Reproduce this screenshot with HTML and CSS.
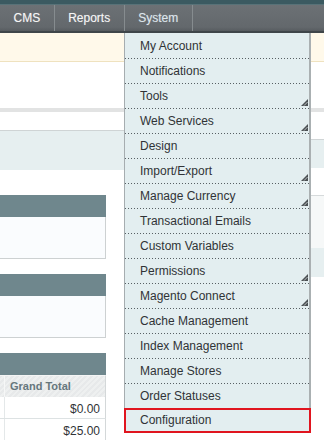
FILE: index.html
```html
<!DOCTYPE html>
<html>
<head>
<meta charset="utf-8">
<link rel="stylesheet" href="styles.css">
</head>
<body>
<div class="page">
  <div class="topbar"></div>
  <nav class="nav">
    <span class="nav-item">CMS</span>
    <span class="nav-item">Reports</span>
    <span class="nav-item nav-active">System</span>
  </nav>
  <div class="notice"></div>
  <div class="blank-top"></div>
  <div class="grey-band"></div>
  <div class="columns">
    <div class="left-col">
      <div class="lc-top"></div>
      <div class="lc-band"></div>
      <div class="lc-gap"></div>
      <div class="box">
        <div class="box-head"></div>
        <div class="box-body"></div>
      </div>
      <div class="box">
        <div class="box-head"></div>
        <div class="box-body"></div>
      </div>
      <div class="box">
        <div class="box-head"></div>
        <div class="grid-head">
          <div class="cell-first"></div>
          <div class="cell-title">Grand Total</div>
        </div>
        <div class="grid-row">
          <div class="cell-first"></div>
          <div class="cell-num">$0.00</div>
        </div>
        <div class="grid-row">
          <div class="cell-first"></div>
          <div class="cell-num">$25.00</div>
        </div>
      </div>
    </div>
    <div class="right-col">
      <div class="rc-top"></div>
      <div class="rc-band"></div>
      <div class="rc-gap"></div>
      <div class="rc-panel"></div>
      <div class="rc-band2"></div>
    </div>
  </div>

  <ul class="dropdown">
    <li><span>My Account</span></li>
    <li><span>Notifications</span></li>
    <li><span>Tools</span><svg class="arrow" viewBox="0 0 7 7" width="7" height="7"><path d="M7 0V7H0Z" fill="#4b5053"/><path d="M3 6.6L6.6 3" stroke="#c8d0d2" stroke-width="0.9"/></svg></li>
    <li><span>Web Services</span><svg class="arrow" viewBox="0 0 7 7" width="7" height="7"><path d="M7 0V7H0Z" fill="#4b5053"/><path d="M3 6.6L6.6 3" stroke="#c8d0d2" stroke-width="0.9"/></svg></li>
    <li><span>Design</span></li>
    <li><span>Import/Export</span><svg class="arrow" viewBox="0 0 7 7" width="7" height="7"><path d="M7 0V7H0Z" fill="#4b5053"/><path d="M3 6.6L6.6 3" stroke="#c8d0d2" stroke-width="0.9"/></svg></li>
    <li><span>Manage Currency</span><svg class="arrow" viewBox="0 0 7 7" width="7" height="7"><path d="M7 0V7H0Z" fill="#4b5053"/><path d="M3 6.6L6.6 3" stroke="#c8d0d2" stroke-width="0.9"/></svg></li>
    <li><span>Transactional Emails</span></li>
    <li><span>Custom Variables</span></li>
    <li><span>Permissions</span><svg class="arrow" viewBox="0 0 7 7" width="7" height="7"><path d="M7 0V7H0Z" fill="#4b5053"/><path d="M3 6.6L6.6 3" stroke="#c8d0d2" stroke-width="0.9"/></svg></li>
    <li><span>Magento Connect</span><svg class="arrow" viewBox="0 0 7 7" width="7" height="7"><path d="M7 0V7H0Z" fill="#4b5053"/><path d="M3 6.6L6.6 3" stroke="#c8d0d2" stroke-width="0.9"/></svg></li>
    <li><span>Cache Management</span></li>
    <li><span>Index Management</span></li>
    <li><span>Manage Stores</span></li>
    <li><span>Order Statuses</span></li>
    <li class="current"><span>Configuration</span></li>
  </ul>
</div>
</body>
</html>
```

FILE: styles.css
```css
* { box-sizing: border-box; }

body {
  margin: 0;
  background: #fff;
  font-family: "Liberation Sans", Arial, sans-serif;
  font-size: 12px;
}

.page {
  position: relative;
  width: 324px;
  height: 440px;
  overflow: hidden;
}

.topbar {
  height: 5px;
  background: #3b5a61;
  border-bottom: 1px solid #587278;
}

.nav {
  display: flex;
  height: 28px;
  background: linear-gradient(#6c7175, #63686c 85%, #575c60);
  border-bottom: 2px solid #3f464a;
}

.nav-item {
  padding: 1px 13.5px 0;
  line-height: 25px;
  color: #f6f6f6;
  border-right: 1px solid #868c8f;
  text-shadow: 0 0 1px rgba(255, 255, 255, 0.35);
}

.nav-active {
  color: #dbe5ec;
}

.notice {
  height: 29px;
  background: #fff9ea;
  border-bottom: 1px solid #efe2bf;
}

.blank-top { height: 46px; }

.grey-band {
  height: 4px;
  background: #e2e3e3;
}

.columns { display: flex; }

.left-col { width: 124px; flex: none; }

.lc-top { height: 18px; }

.lc-band {
  height: 40px;
  background: #e6eff0;
  border-top: 1px solid #cfd4d5;
}

.lc-gap { height: 25px; }

.box { width: 106px; }

.box + .box { margin-top: 15px; }

.box-head {
  height: 22px;
  background: #6f878d;
}

.box-body {
  height: 42px;
  background: #fafcfe;
  border-right: 1px solid #cdd1d2;
  border-bottom: 1px solid #cdd1d2;
}

.grid-head {
  display: flex;
  height: 22px;
  border-top: 1px solid #f4f5f5;
  border-right: 1px solid #d4d8d9;
  background: repeating-linear-gradient(135deg, #e7e9ea 0 2px, #eef0f0 2px 4px);
}

.cell-first {
  width: 5px;
  flex: none;
  border-right: 1px solid #f6f7f7;
}

.cell-title {
  padding-left: 5px;
  line-height: 21px;
  font-size: 11px;
  font-weight: bold;
  color: #66777d;
}

.grid-row {
  display: flex;
  height: 22px;
  border-right: 1px solid #d4d8d9;
  border-bottom: 1px solid #dde2e3;
}

.grid-row .cell-first { border-right-color: #e4e8e9; }

.cell-num {
  flex: 1;
  text-align: right;
  padding: 2px 5px 0 0;
  line-height: 20px;
  color: #303336;
}

.right-col { flex: 1; }

.rc-top { height: 27px; }

.rc-band {
  height: 29px;
  background: #e6eff0;
  border-top: 1px solid #d0d5d6;
}

.rc-gap { height: 27px; }

.rc-panel {
  height: 53px;
  background: #f6f8f8;
  border-top: 1px solid #d6dadb;
}

.rc-band2 {
  height: 29px;
  background: #e6eff0;
}

.dropdown {
  position: absolute;
  left: 124px;
  top: 33px;
  width: 187px;
  margin: 0;
  padding: 1px 0 0;
  list-style: none;
  background: #e3eef0;
  border-left: 1px solid #a6adb0;
  border-right: 2px solid #aab0b2;
}

.dropdown li {
  display: flex;
  justify-content: space-between;
  height: 25px;
  padding: 0 1px 0 15px;
  line-height: 24px;
  color: #303336;
  background-image: linear-gradient(to right, #586064 1px, transparent 1px);
  background-size: 3px 1px;
  background-repeat: repeat-x;
  background-position: 0 100%;
}

.dropdown .arrow {
  align-self: flex-end;
  flex: none;
  margin-bottom: 3px;
}

.dropdown li.current {
  margin: -1px -2px 0 -1px;
  padding-left: 14px;
  line-height: 21px;
  border: 2px solid #e0151f;
  background-image: none;
}
```
